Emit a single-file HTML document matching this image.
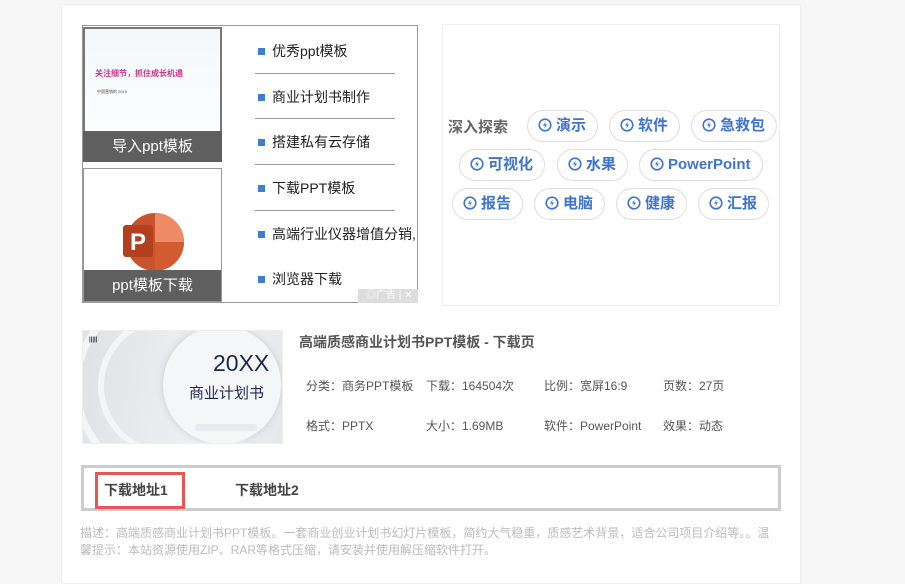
<!DOCTYPE html>
<html><head><meta charset="utf-8"><style>
*{margin:0;padding:0;box-sizing:border-box}
body{width:905px;height:568px;background:#f6f6f6;font-family:"Liberation Sans","Noto Sans CJK SC",sans-serif;position:relative;overflow:hidden}
.abs{position:absolute;white-space:nowrap}
.panel{left:61px;top:4px;width:740px;height:580px;background:#fff;border:1px solid #eee}
.ad{left:82px;top:25px;width:336px;height:278px;border:1px solid #999;background:#fff}
.img1{left:83px;top:27px;width:139px;height:135px;border:2px solid #777;background:linear-gradient(#f4f8fb,#fff)}
.img2{left:83px;top:168px;width:139px;height:134px;border:1px solid #999;background:#fff}
.lab{left:0;right:0;bottom:0;height:31px;background:#5f5f5f;color:#fff;font-size:15px;text-align:center;line-height:31px}
.li{left:258px;font-size:14px;color:#222}
.li:before{content:"";display:inline-block;width:7px;height:7px;background:#3d7fcf;margin-right:7px;vertical-align:1px}
.sep{left:255px;width:140px;height:1px;background:#999}
.rb{left:442px;top:24px;width:338px;height:282px;border:1px solid #eee}
.tag{position:absolute;height:32px;border:1px solid #ddd;border-radius:16px;color:#3e74d0;font-size:15px;font-weight:bold;line-height:30px;padding:0 11px 0 10px;white-space:nowrap}
.tag svg{vertical-align:-2px;margin-right:4px}
.info{font-size:12px;color:#555}
.desc{left:80px;width:700px;font-size:12px;color:#bbb;line-height:17px;white-space:normal}
</style></head><body>
<svg width="0" height="0" style="position:absolute"><defs><symbol id="b" viewBox="0 0 14 14"><circle cx="7" cy="7" r="5.8" fill="none" stroke="#3e74d0" stroke-width="1.6"/><path d="M7.8 3.2L5 7.6H7L6.2 10.8L9 6.4H7Z" fill="#3e74d0"/></symbol></defs></svg>
<div class="abs panel"></div>
<div class="abs ad"></div>
<div class="abs img1">
 <div class="abs" style="left:10px;top:39px;font-size:8px;color:#d0308a;font-weight:bold">关注细节，抓住成长机遇</div>
 <div class="abs" style="left:12px;top:60px;font-size:4px;color:#444">中国营销的 2019</div>
 <div class="abs lab" style="left:-2px;right:-2px;bottom:-2px">导入ppt模板</div>
</div>
<div class="abs img2">
 <svg class="abs" style="left:38px;top:43px" width="62" height="60" viewBox="0 0 62 60">
  <circle cx="33" cy="30" r="29" fill="#c9532f"/>
  <path d="M33 1A29 29 0 0 1 62 30H33Z" fill="#ee8a66"/>
  <path d="M33 30H62A29 29 0 0 1 33 59Z" fill="#d35b32"/>
  <rect x="1" y="13" width="30" height="32" rx="3" fill="#b2401f"/>
  <text x="8" y="38" font-family="Liberation Sans" font-weight="bold" font-size="24" fill="#fff">P</text>
 </svg>
 <div class="abs lab">ppt模板下载</div>
</div>
<div class="abs li" style="top:41px">优秀ppt模板</div>
<div class="abs sep" style="top:73px"></div>
<div class="abs li" style="top:87px">商业计划书制作</div>
<div class="abs sep" style="top:118px"></div>
<div class="abs li" style="top:132px">搭建私有云存储</div>
<div class="abs sep" style="top:164px"></div>
<div class="abs li" style="top:178px">下载PPT模板</div>
<div class="abs sep" style="top:210px"></div>
<div class="abs li" style="top:224px;width:159px;overflow:hidden">高端行业仪器增值分销,</div>
<div class="abs li" style="top:269px">浏览器下载</div>
<div class="abs" style="left:358px;top:289px;width:60px;height:14px;background:#ddd;color:#fff;font-size:10px;line-height:14px;padding-left:8px">◎广告 | ✕</div>

<div class="abs rb"></div>
<div class="abs" style="left:448px;top:116px;font-size:15px;color:#666;font-weight:bold">深入探索</div>
<div class="tag" style="left:527px;top:110px"><svg width="14" height="14"><use href="#b"/></svg>演示</div>
<div class="tag" style="left:609px;top:110px"><svg width="14" height="14"><use href="#b"/></svg>软件</div>
<div class="tag" style="left:691px;top:110px"><svg width="14" height="14"><use href="#b"/></svg>急救包</div>
<div class="tag" style="left:459px;top:149px"><svg width="14" height="14"><use href="#b"/></svg>可视化</div>
<div class="tag" style="left:557px;top:149px"><svg width="14" height="14"><use href="#b"/></svg>水果</div>
<div class="tag" style="left:639px;top:149px"><svg width="14" height="14"><use href="#b"/></svg>PowerPoint</div>
<div class="tag" style="left:452px;top:188px"><svg width="14" height="14"><use href="#b"/></svg>报告</div>
<div class="tag" style="left:534px;top:188px"><svg width="14" height="14"><use href="#b"/></svg>电脑</div>
<div class="tag" style="left:616px;top:188px"><svg width="14" height="14"><use href="#b"/></svg>健康</div>
<div class="tag" style="left:698px;top:188px"><svg width="14" height="14"><use href="#b"/></svg>汇报</div>

<div class="abs" style="left:82px;top:330px;width:201px;height:114px;background:linear-gradient(100deg,#dfe1e5,#eef0f3 60%,#e6e8ec);border:1px solid #eee;overflow:hidden">
 <div class="abs" style="left:-10px;top:-40px;width:190px;height:190px;border-radius:50%;border:7px solid #f4f5f7"></div>
 <div class="abs" style="left:15px;top:-15px;width:140px;height:140px;border-radius:50%;border:6px solid #f4f5f7"></div>
 <div class="abs" style="left:80px;top:-5px;width:118px;height:118px;border-radius:50%;background:#f5f6f8;box-shadow:0 0 8px #ccc"></div>
 <div class="abs" style="left:130px;top:19px;font-size:23px;color:#1c2a50">20XX</div>
 <div class="abs" style="left:106px;top:51px;font-size:15px;color:#1c2a50">商业计划书</div>
 <div class="abs" style="left:112px;top:93px;width:62px;height:7px;border-radius:4px;background:#e8eaef"></div>
 <div class="abs" style="left:6px;top:6px;font-size:6px;color:#333;font-weight:bold">|||||</div>
</div>
<div class="abs" style="left:299px;top:332px;font-size:14px;font-weight:bold;color:#555">高端质感商业计划书PPT模板 - 下载页</div>
<div class="abs info" style="left:306px;top:377px">分类：商务PPT模板</div>
<div class="abs info" style="left:426px;top:377px">下载：164504次</div>
<div class="abs info" style="left:544px;top:377px">比例：宽屏16:9</div>
<div class="abs info" style="left:663px;top:377px">页数：27页</div>
<div class="abs info" style="left:306px;top:417px">格式：PPTX</div>
<div class="abs info" style="left:426px;top:417px">大小：1.69MB</div>
<div class="abs info" style="left:544px;top:417px">软件：PowerPoint</div>
<div class="abs info" style="left:663px;top:417px">效果：动态</div>

<div class="abs" style="left:81px;top:465px;width:700px;height:46px;border:3px solid #ccc"></div>
<div class="abs" style="left:95px;top:472px;width:90px;height:37px;border:3px solid #e95454"></div>
<div class="abs" style="left:104px;top:480px;font-size:14px;font-weight:bold;color:#444">下载地址1</div>
<div class="abs" style="left:235px;top:480px;font-size:14px;font-weight:bold;color:#444">下载地址2</div>
<div class="abs desc" style="top:525px">描述：高端质感商业计划书PPT模板。一套商业创业计划书幻灯片模板，简约大气稳重，质感艺术背景，适合公司项目介绍等。。温馨提示：本站资源使用ZIP、RAR等格式压缩，请安装并使用解压缩软件打开。</div>
</body></html>
